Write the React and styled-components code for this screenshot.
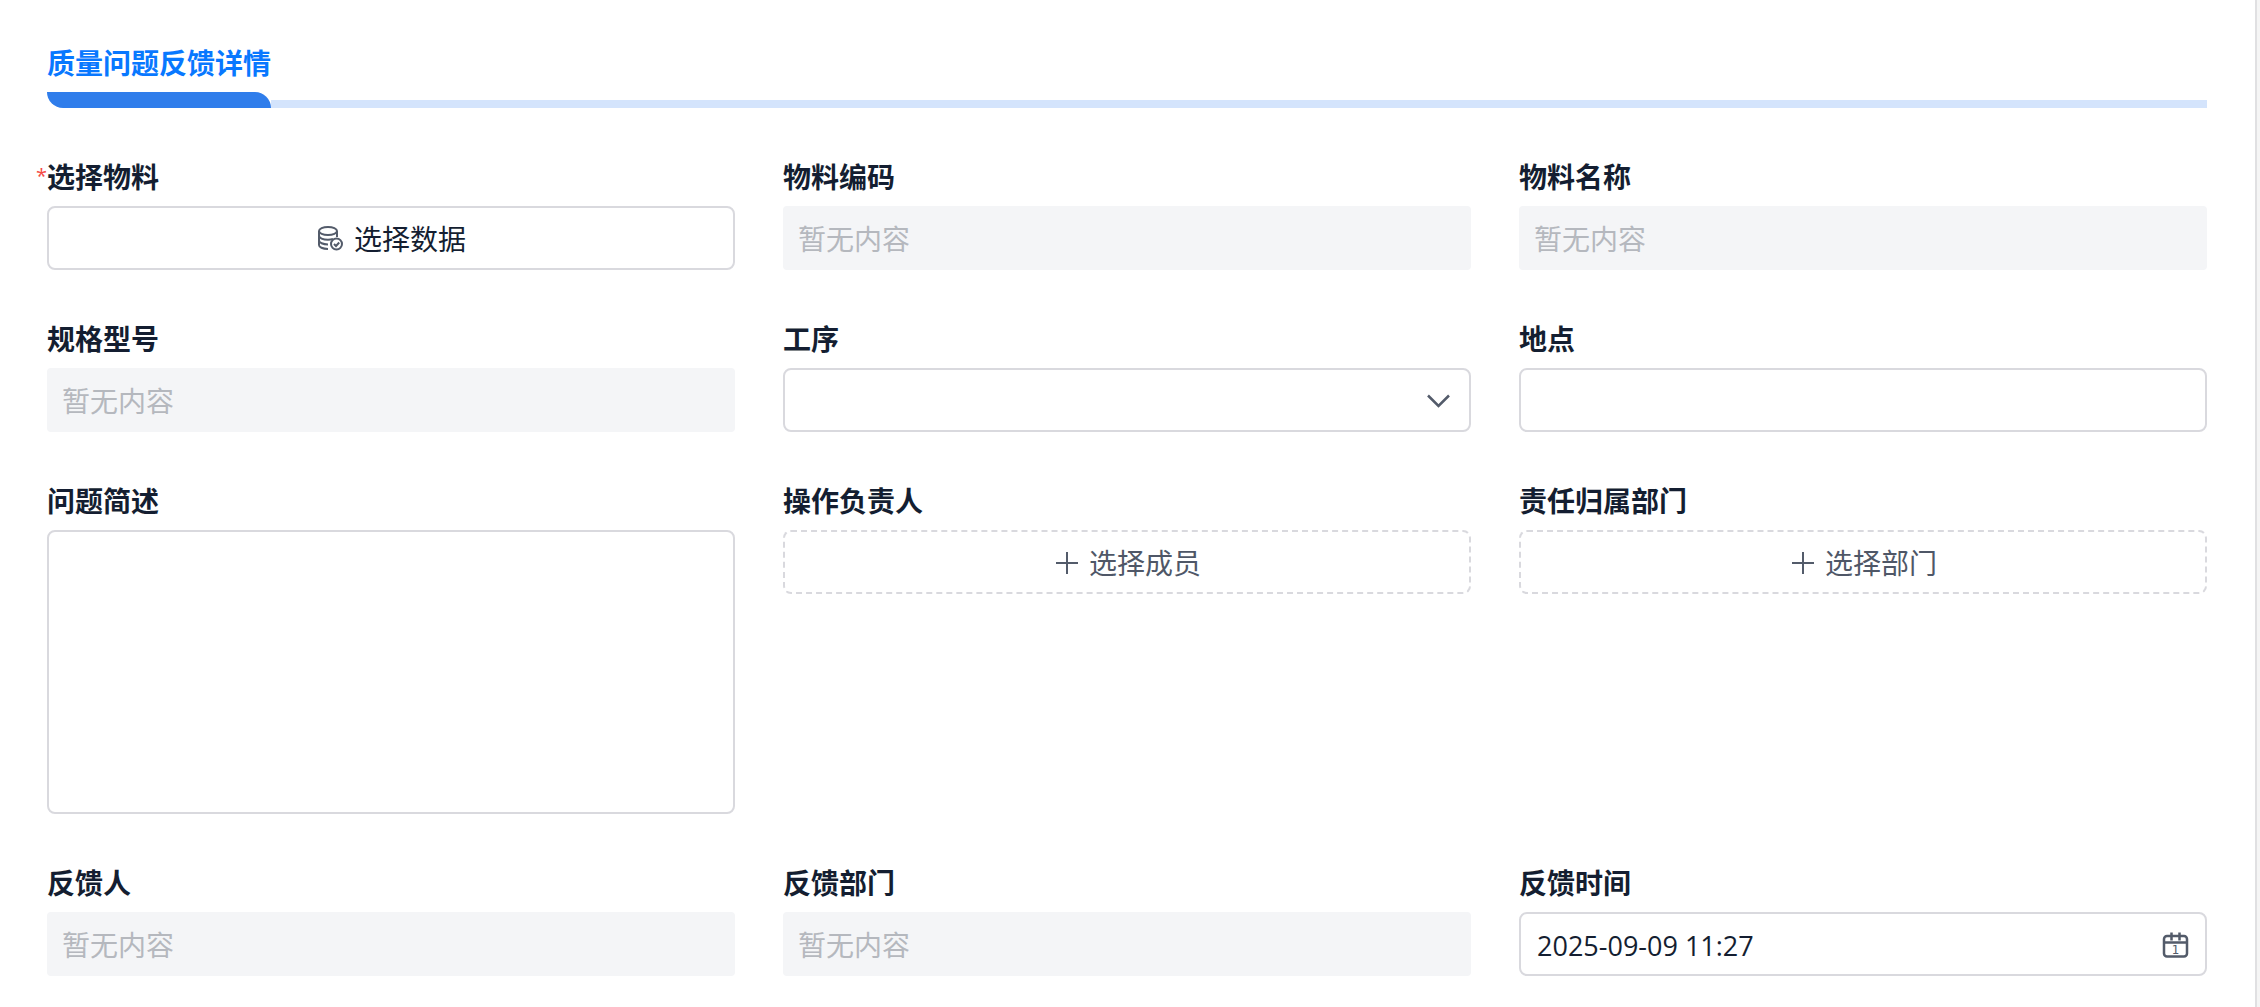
import React from "react";
import styled, { createGlobalStyle, css } from "styled-components";

const GlobalStyle = createGlobalStyle`
  * { box-sizing: border-box; }
  body {
    margin: 0;
    background: #f5f5f5;
    color: #141e31;
    font-family: "Open Sans", "Noto Sans CJK SC", sans-serif;
    font-size: 28px;
    line-height: 40px;
  }
  button, input, select, textarea { font: inherit; color: inherit; margin: 0; }
`;

const Sheet = styled.main`
  min-height: 100vh;
  margin-right: 3px;
  padding: 42px 48px 30px 47px;
  background: #ffffff;
  border-right: 2px solid #e0e0e2;
`;

const Header = styled.header`
  display: flex;
  align-items: flex-end;
  margin-bottom: 48px;
`;

const Title = styled.h1`
  margin: 0;
  font-family: "Noto Sans CJK SC", sans-serif;
  font-size: 28px;
  line-height: 40px;
  font-weight: 700;
  color: #0878ff;

  &::after {
    content: "";
    display: block;
    height: 16px;
    margin-top: 10px;
    background: #2f7deb;
    border-radius: 0 16px 0 16px;
  }
`;

const Rule = styled.div`
  flex: 1;
  height: 8px;
  background: #d4e4fc;
`;

const Form = styled.form`
  display: grid;
  grid-template-columns: repeat(3, minmax(0, 1fr));
  gap: 48px;
  align-items: start;
`;

const FieldBox = styled.div`
  display: flex;
  flex-direction: column;
  gap: 10px;
`;

const Label = styled.label`
  display: flex;
  font-family: "Noto Sans CJK SC", sans-serif;
  font-weight: 700;
`;

const Required = styled.span`
  width: 12px;
  margin-left: -12px;
  padding-left: 1px;
  font-family: "Open Sans", sans-serif;
  font-size: 20px;
  font-weight: 400;
  line-height: 40px;
  color: #f54a45;
`;

const control = css`
  display: block;
  width: 100%;
  height: 64px;
  padding: 2px 16px 0;
  background: #ffffff;
  border: 2px solid #d9d9de;
  border-radius: 8px;
  outline: none;
`;

const TextInput = styled.input`
  ${control}
`;

const DateInput = styled.input`
  ${control}
  font-size: 27px;
`;

const EmptyInput = styled.input`
  ${control}
  padding: 2px 15px 0;
  background: #f4f5f7;
  border: 0;
  border-radius: 4px;

  &::placeholder {
    color: #b5b8be;
    opacity: 1;
  }
`;

const TextArea = styled.textarea`
  ${control}
  height: 284px;
  padding: 10px 16px;
  resize: none;
`;

const Select = styled.select`
  ${control}
  appearance: none;
`;

const PickButton = styled.button`
  ${control}
  display: flex;
  align-items: center;
  justify-content: center;
  gap: ${(p) => (p.$dashed ? "8px" : "10px")};
  cursor: pointer;
  color: ${(p) => (p.$dashed ? "#4f5767" : "#141e31")};
  border-style: ${(p) => (p.$dashed ? "dashed" : "solid")};
`;

const WithIcon = styled.div`
  display: grid;
  grid-template-columns: 1fr 48px 8px;
  align-items: center;

  > input, > select { grid-area: 1 / 1 / 2 / -1; }
  > svg { grid-area: 1 / 2; justify-self: center; pointer-events: none; }
`;

const Icon = styled.svg.attrs({ width: 28, height: 28, viewBox: "0 0 28 28", "aria-hidden": true })`
  flex: none;
  fill: none;
  stroke: #535b6a;
  stroke-width: ${(p) => (p.$bold ? "2.5px" : "2px")};
`;

const DatabaseIcon = () => (
  <Icon>
    <ellipse cx="12" cy="6" rx="9" ry="4" />
    <path d="M3 6v14c0 2 3.500 4 9 4M21 6v6M3 10.500c0 2.500 4 4.200 9 4.200 2 0 3.500-.2 5-.7M3 15.200c0 2.500 4 4.200 9 4.200" />
    <circle cx="20.500" cy="19" r="5.500" />
    <path d="m18 19 2 2 3.200-3.500" />
  </Icon>
);

const PlusIcon = () => (
  <Icon>
    <path d="M3 14h22M14 3v22" />
  </Icon>
);

const ChevronIcon = () => (
  <Icon $bold>
    <path d="M3 9.500 13.500 20 24 9.500" />
  </Icon>
);

const CalendarIcon = () => (
  <Icon $bold>
    <rect x="3" y="6" width="23" height="20.500" rx="3" />
    <path d="M3 12.500h23M10.500 2.500v8M18.500 2.500v8" />
    <text x="14.500" y="24" textAnchor="middle" fontFamily="DejaVu Sans" fontSize="12" fill="#535b6a" stroke="none">1</text>
  </Icon>
);

function Field({ id, label, required, children }) {
  return (
    <FieldBox>
      <Label htmlFor={id}>
        {required && <Required>*</Required>}
        {label}
      </Label>
      {children}
    </FieldBox>
  );
}

function EmptyField({ id, label }) {
  return (
    <Field id={id} label={label}>
      <EmptyInput id={id} placeholder="暂无内容" readOnly />
    </Field>
  );
}

export default function App() {
  return (
    <>
      <GlobalStyle />
      <Sheet>
        <Header>
          <Title>质量问题反馈详情</Title>
          <Rule />
        </Header>
        <Form>
          <Field id="material" label="选择物料" required>
            <PickButton id="material" type="button"><DatabaseIcon />选择数据</PickButton>
          </Field>
          <EmptyField id="code" label="物料编码" />
          <EmptyField id="name" label="物料名称" />
          <EmptyField id="model" label="规格型号" />
          <Field id="process" label="工序">
            <WithIcon>
              <Select id="process"><option value="" /></Select>
              <ChevronIcon />
            </WithIcon>
          </Field>
          <Field id="place" label="地点">
            <TextInput id="place" type="text" />
          </Field>
          <Field id="summary" label="问题简述">
            <TextArea id="summary" />
          </Field>
          <Field id="operator" label="操作负责人">
            <PickButton id="operator" type="button" $dashed><PlusIcon />选择成员</PickButton>
          </Field>
          <Field id="owner" label="责任归属部门">
            <PickButton id="owner" type="button" $dashed><PlusIcon />选择部门</PickButton>
          </Field>
          <EmptyField id="reporter" label="反馈人" />
          <EmptyField id="department" label="反馈部门" />
          <Field id="time" label="反馈时间">
            <WithIcon>
              <DateInput id="time" type="text" defaultValue="2025-09-09 11:27" />
              <CalendarIcon />
            </WithIcon>
          </Field>
        </Form>
      </Sheet>
    </>
  );
}
